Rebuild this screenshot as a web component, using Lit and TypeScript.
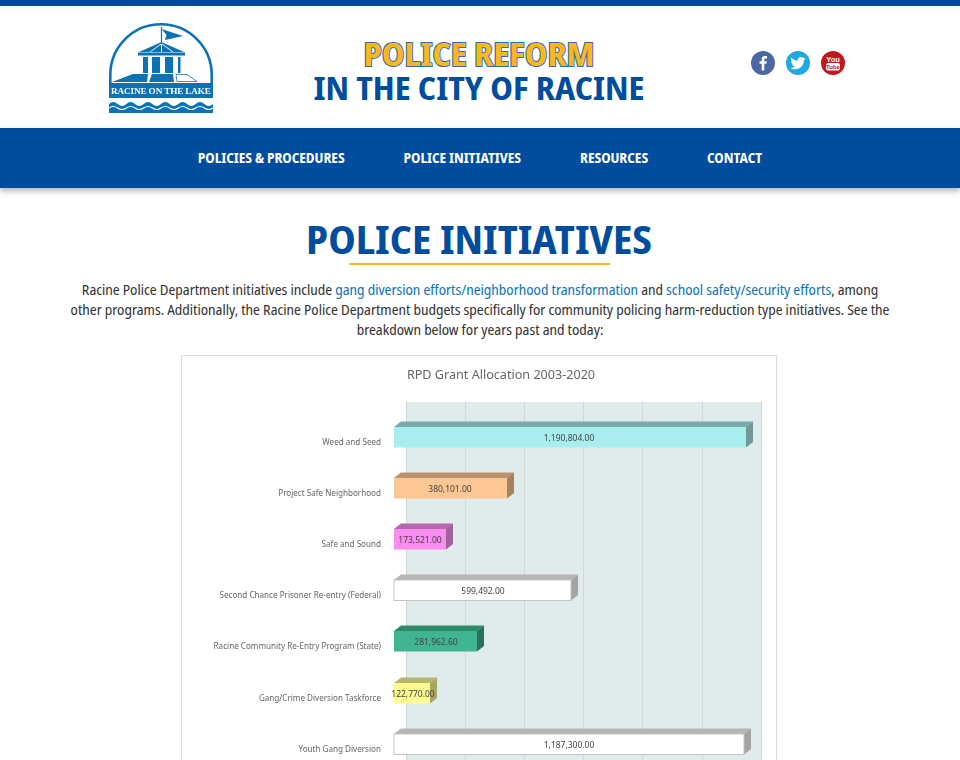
import { LitElement, html, css, svg } from "lit";
import { customElement } from "lit/decorators.js";

interface Bar { label: string; value: string; y: number; right: number; vx: number; fill: string; top: string; side: string; line?: string; }

const bars: Bar[] = [
  { label: "Weed and Seed", value: "1,190,804.00", y: 427, right: 746, vx: 569, fill: "#a8eeee", top: "#7aabab", side: "#6f9999" },
  { label: "Project Safe Neighborhood", value: "380,101.00", y: 478, right: 507, vx: 450, fill: "#fdc793", top: "#b8936e", side: "#a8835f" },
  { label: "Safe and Sound", value: "173,521.00", y: 529, right: 446, vx: 420, fill: "#f98df0", top: "#b767ae", side: "#a0609b" },
  { label: "Second Chance Prisoner Re-entry (Federal)", value: "599,492.00", y: 580, right: 571, vx: 483, fill: "#ffffff", top: "#b5b5b5", side: "#a3a3a3", line: "#c4c4c4" },
  { label: "Racine Community Re-Entry Program (State)", value: "281,962.60", y: 631, right: 477, vx: 436, fill: "#3fb691", top: "#2f8a6c", side: "#267257" },
  { label: "Gang/Crime Diversion Taskforce", value: "122,770.00", y: 683, right: 430, vx: 413, fill: "#fbf98f", top: "#b8b66a", side: "#a8a660" },
  { label: "Youth Gang Diversion", value: "1,187,300.00", y: 734, right: 744, vx: 569, fill: "#ffffff", top: "#b5b5b5", side: "#a3a3a3", line: "#c4c4c4" },
];

const grid = [406, 465, 524, 583, 642, 702, 761];
const wave = "t8.667 0".repeat(11);

@customElement("app-root")
export class AppRoot extends LitElement {
  static styles = css`
    :host { display: block; height: 760px; overflow: hidden; background: #fff; font-family: "Noto Sans Display", "Noto Sans", sans-serif; font-stretch: 80%; }
    .topbar { height: 6px; background: #004c9e; }
    .header { height: 122px; display: grid; grid-template-columns: repeat(3, 320px); align-items: center; justify-items: center; }
    .logo { display: block; width: 106px; height: 93px; margin-left: 4px; filter: blur(0.3px); }
    .title { text-align: center; font-weight: 700; font-size: 33px; line-height: 34px; color: #004c9e; white-space: nowrap; margin: 7px 2px 0 0; }
    .title .gold { display: block; color: #fdb71c; -webkit-text-stroke: 2px #2a6db3; paint-order: stroke fill; }
    .title .navy { display: block; }
    .social { display: flex; gap: 11px; margin: -8px 4px 0 0; }
    .social svg { display: block; width: 24px; height: 24px; }
    nav { height: 60px; padding-bottom: 1px; box-sizing: border-box; background: #004c9e; box-shadow: 0 3px 6px rgba(0,0,0,.3); display: flex; justify-content: center; align-items: center; gap: 59px; position: relative; }
    nav a { color: #fff; font-weight: 700; font-size: 13.7px; letter-spacing: -0.05px; text-decoration: none; white-space: nowrap; }
    main { display: flex; flex-direction: column; align-items: center; }
    h1 { margin: 26px 2px 0 0; font-size: 40px; line-height: 49px; font-weight: 700; color: #004c9e; white-space: nowrap; }
    .rule { width: 261px; height: 2px; margin-right: 2px; background: #fdb71c; }
    p { margin: 15px 0 0; width: 824px; text-align: center; font-size: 14.1px; line-height: 20px; color: #333; }
    p a { color: #0b75bb; text-decoration: none; }
    .chart { display: block; margin-top: 15px; font-stretch: 100%; filter: blur(0.25px); }
  `;

  private logo() {
    const c = "#0b72b6";
    return html`<svg class="logo" viewBox="109 21 106 93" aria-label="Racine on the Lake">
      <path d="M110.300 83V75a50.700 50.700 0 0 1 101.400 0V83" fill="none" stroke=${c} stroke-width="2.600"/>
      <path d="M161.500 27V42" stroke=${c} stroke-width="1.200"/>
      <path d="M161.500 29L183 36L165 40L166.500 35Z" fill=${c}/>
      <path d="M161.500 42L184 52H139Z" fill=${c}/>
      <path d="M161.500 44V52M161 44L150 52M162 44L173 52" stroke="#fff" stroke-width=".9"/>
      <rect x="138" y="52.500" width="47" height="3" fill=${c}/>
      <rect x="143" y="57" width="5" height="16" fill=${c}/>
      <rect x="152" y="57" width="8" height="16" fill=${c}/>
      <rect x="165" y="57" width="8" height="16" fill=${c}/>
      <rect x="178" y="57" width="2.500" height="16" fill=${c}/>
      <path d="M133 74H148L147 82H112Z" fill=${c}/>
      <path d="M152 74H173L174 82H149Z" fill=${c}/>
      <path d="M176 74.500H187L197 81.500H177Z" fill="#fff" stroke=${c} stroke-width=".8"/>
      <rect x="109" y="83" width="104" height="15" fill=${c}/>
      <text x="161" y="93.800" text-anchor="middle" textLength="100" fill="#fff" font-family="Liberation Serif" font-weight="700" font-size="9.200">RACINE ON THE LAKE</text>
      <path d="M109 104q4.333 -4 8.667 0${wave}V113H109Z" fill=${c}/>
      <path d="M109 108q4.333 -3 8.667 0${wave}" fill="none" stroke="#fff" stroke-width="1.100"/>
    </svg>`;
  }

  private social() {
    return html`<div class="social">
      <svg viewBox="0 0 24 24" aria-label="Facebook"><circle cx="12" cy="12" r="12" fill="#4b68a5"/><path d="M13.300 19.500V12.800H15.500L15.900 10.200H13.300V8.700C13.300 7.900 13.600 7.400 14.600 7.400H16V5.100C15.700 5.100 14.900 5 14 5C12.100 5 10.700 6.200 10.700 8.400V10.200H8.500V12.800H10.700V19.500Z" fill="#fff"/></svg>
      <svg viewBox="0 0 24 24" aria-label="Twitter"><circle cx="12" cy="12" r="12" fill="#22a7e0"/><path d="M19.500 7.400C19 7.600 18.400 7.800 17.700 7.900C18.300 7.500 18.800 6.900 19 6.200C18.400 6.500 17.800 6.800 17.100 6.900C16.500 6.300 15.700 5.900 14.800 5.900C13.100 5.900 11.700 7.300 11.700 9C11.700 9.200 11.700 9.500 11.800 9.700C9.200 9.600 6.900 8.300 5.400 6.400C5.100 6.900 5 7.400 5 8C5 9.100 5.500 10 6.400 10.600C5.900 10.600 5.400 10.400 5 10.200C5 11.700 6.100 13 7.500 13.300C7.200 13.400 6.700 13.400 6.100 13.300C6.500 14.600 7.700 15.500 9 15.500C7.600 16.600 6 17.100 4.400 16.900C5.800 17.800 7.400 18.300 9.100 18.300C14.800 18.300 17.900 13.600 17.900 9.500V9.100C18.500 8.700 19.100 8.100 19.500 7.400Z" fill="#fff"/></svg>
      <svg viewBox="0 0 24 24" aria-label="YouTube"><circle cx="12" cy="12" r="12" fill="#c4161c"/><text x="12" y="10.500" text-anchor="middle" fill="#fff" font-family="Liberation Sans" font-weight="700" font-size="7.500">You</text><rect x="5" y="12" width="14" height="7.500" rx="2.200" fill="#fff"/><text x="12" y="17.800" text-anchor="middle" fill="#c4161c" font-family="Liberation Sans" font-weight="700" font-size="6">Tube</text></svg>
    </div>`;
  }

  private chart() {
    return html`<svg class="chart" width="598" height="460" viewBox="181 355 598 460" font-family="Noto Sans, Open Sans, sans-serif">
      <rect x="181.500" y="355.500" width="595" height="470" fill="#fff" stroke="#dcdcdc"/>
      <text x="501" y="379" text-anchor="middle" font-size="12.600" fill="#666">RPD Grant Allocation 2003-2020</text>
      <rect x="406" y="402" width="355" height="420" fill="#e0ecec"/>
      ${grid.map((x) => svg`<line x1=${x + 0.5} x2=${x + 0.5} y1="402" y2="822" stroke="#d2d6d6"/>`)}
      ${bars.map((b) => {
        const h = 20.5, l = 394, dx = 7, dy = 5.500;
        return svg`
          <path d="M${l} ${b.y}L${l + dx} ${b.y - dy}H${b.right + dx}L${b.right} ${b.y}Z" fill=${b.top}/>
          <path d="M${b.right} ${b.y}L${b.right + dx} ${b.y - dy}V${b.y + h - dy}L${b.right} ${b.y + h}Z" fill=${b.side}/>
          <rect x=${l} y=${b.y} width=${b.right - l} height=${h} fill=${b.fill} stroke=${b.line ?? "none"}/>
          <text x="381" y=${b.y + 18} text-anchor="end" font-size="8.100" fill="#666">${b.label}</text>
          <text x=${b.vx} y=${b.y + 14} text-anchor="middle" font-size="8.500" fill="#444">${b.value}</text>`;
      })}
    </svg>`;
  }

  render() {
    return html`
      <div class="topbar"></div>
      <header class="header">
        ${this.logo()}
        <div class="title"><span class="gold">POLICE REFORM</span><span class="navy">IN THE CITY OF RACINE</span></div>
        ${this.social()}
      </header>
      <nav>
        <a href="#">POLICIES &amp; PROCEDURES</a>
        <a href="#">POLICE INITIATIVES</a>
        <a href="#">RESOURCES</a>
        <a href="#">CONTACT</a>
      </nav>
      <main>
        <h1>POLICE INITIATIVES</h1>
        <div class="rule"></div>
        <p>Racine Police Department initiatives include <a href="#">gang diversion efforts/neighborhood transformation</a> and <a href="#">school safety/security efforts</a>, among other programs. Additionally, the Racine Police Department budgets specifically for community policing harm-reduction type initiatives. See the breakdown below for years past and today:</p>
        ${this.chart()}
      </main>
    `;
  }
}
